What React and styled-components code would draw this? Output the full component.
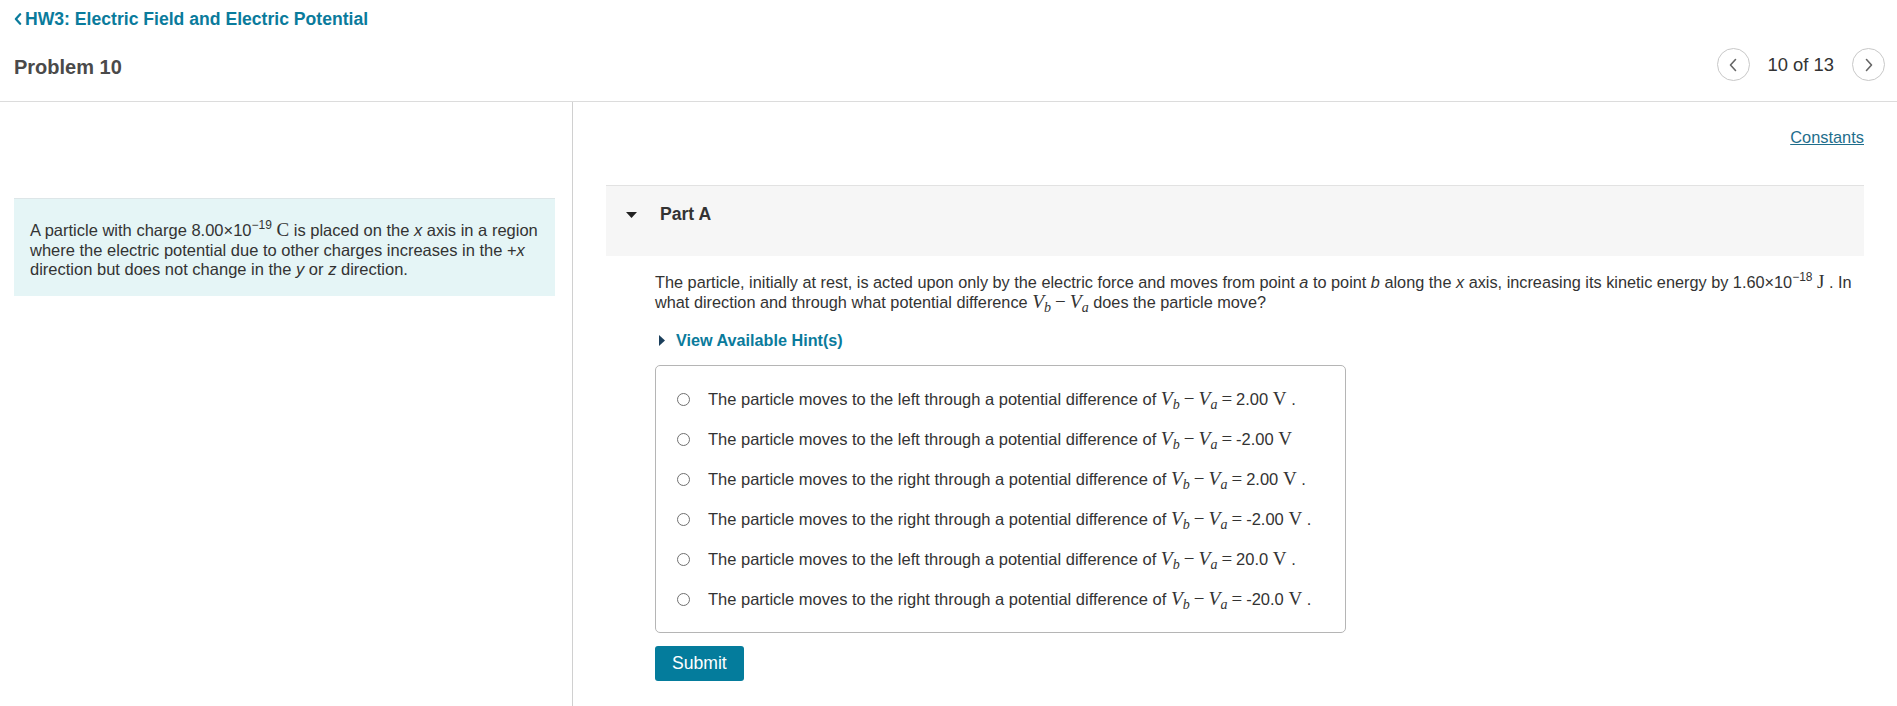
import React from 'react'
import styled, { createGlobalStyle } from 'styled-components'

const GlobalStyle = createGlobalStyle`
  html, body {
    margin: 0;
    padding: 0;
    background: #fff;
  }
  body {
    font-family: 'Liberation Sans', Arial, sans-serif;
    color: #333;
    font-size: 16.5px;
  }
`

const teal = '#0a7b9c'

const Page = styled.div`
  min-height: 706px;
  display: flex;
  flex-direction: column;
`

const TopBar = styled.header`
  border-bottom: 1px solid #dcdcdc;
`

const BackLink = styled.a`
  display: flex;
  align-items: center;
  gap: 3px;
  padding: 10px 14px 0;
  height: 18px;
  font-size: 17.6px;
  font-weight: bold;
  color: ${teal};
  text-decoration: none;
`

const TitleRow = styled.div`
  display: flex;
  align-items: center;
  justify-content: space-between;
  height: 73px;
  padding: 0 12px 0 14px;
`

const Title = styled.h1`
  margin: 6px 0 0;
  font-size: 20px;
  font-weight: bold;
  color: #4a4a4a;
`

const Pager = styled.div`
  display: flex;
  align-items: center;
  gap: 18px;
`

const NavButton = styled.button`
  width: 33px;
  height: 33px;
  border-radius: 50%;
  border: 1px solid #c8c8c8;
  background: #fff;
  display: flex;
  align-items: center;
  justify-content: center;
  padding: 0;
`

const PageCount = styled.span`
  font-size: 18.4px;
  color: #333;
`

const Body = styled.div`
  flex: 1;
  display: grid;
  grid-template-columns: 573px 1fr;
`

const Sidebar = styled.aside`
  border-right: 1px solid #d0d0d0;
  padding: 96px 17px 0 14px;
`

const Intro = styled.div`
  background: #e5f5f6;
  border-top: 1px solid #dde6e8;
  padding: 21px 6px 16px 16px;
  line-height: 19.5px;
  color: #333;
`

const Main = styled.main`
  padding: 0 33px;
  display: flex;
  flex-direction: column;
`

const ConstantsLink = styled.a`
  align-self: flex-end;
  margin-top: 25px;
  line-height: 20px;
  color: #1f6e8c;
  text-decoration: underline;
  font-size: 16.4px;
`

const PartHeader = styled.div`
  margin-top: 38px;
  height: 71px;
  box-sizing: border-box;
  background: #f6f6f6;
  border-top: 1px solid #e2e2e2;
  display: flex;
  align-items: flex-start;
  gap: 23px;
  padding: 19px 20px 0;
`

const PartTitle = styled.span`
  font-size: 17.6px;
  font-weight: bold;
  color: #333;
  line-height: 18px;
`

const PartBody = styled.div`
  padding-left: 49px;
  display: flex;
  flex-direction: column;
  align-items: flex-start;
`

const Question = styled.p`
  margin: 16px -10px 0 0;
  line-height: 20px;
  font-size: 16.3px;
  color: #333;
`

const HintToggle = styled.a`
  margin-top: 19px;
  display: flex;
  align-items: center;
  gap: 11px;
  padding-left: 4px;
  font-weight: bold;
  font-size: 16.2px;
  line-height: 18px;
  color: ${teal};
  text-decoration: none;
`

const Choices = styled.div`
  margin-top: 16px;
  width: 691px;
  box-sizing: border-box;
  border: 1px solid #b5b5b5;
  border-radius: 5px;
  padding: 13px 0 13px;
`

const Choice = styled.label`
  display: flex;
  align-items: center;
  height: 40px;
  padding-left: 21px;
  color: #333;
`

const ChoiceText = styled.span`
  white-space: nowrap;
`

const Radio = styled.span`
  width: 11px;
  height: 11px;
  border-radius: 50%;
  border: 1px solid #707070;
  margin-right: 18px;
  flex-shrink: 0;
`

const SubmitButton = styled.button`
  margin-top: 13px;
  height: 35px;
  padding: 0 17px;
  border: 0;
  border-radius: 3px;
  background: #047c9c;
  color: #fff;
  font-family: 'Liberation Sans', Arial, sans-serif;
  font-size: 17.6px;
`

const MathVar = styled.span`
  font-family: 'Liberation Serif', 'Times New Roman', serif;
  font-style: italic;
  font-size: 19.5px;
`

const MathRoman = styled.span`
  font-family: 'Liberation Serif', 'Times New Roman', serif;
  font-size: 19px;
  margin: 0 ${(p) => (p.$gap ? '4px' : '0')};
`

const Sub = styled.sub`
  font-size: 14px;
  vertical-align: -4px;
  line-height: 0;
  font-family: 'Liberation Serif', 'Times New Roman', serif;
  font-style: italic;
`

const Sup = styled.sup`
  font-size: 12px;
  vertical-align: 7px;
  line-height: 0;
`

const Em = styled.i``

const Chevron = ({ dir, color = '#666', w = 8, h = 14, sw = 1.6 }) => (
  <svg width={w} height={h} viewBox="0 0 8 14">
    <polyline
      points={dir === 'left' ? '6.5,1.5 1.5,7 6.5,12.5' : '1.5,1.5 6.5,7 1.5,12.5'}
      fill="none"
      stroke={color}
      strokeWidth={sw}
      strokeLinecap="round"
      strokeLinejoin="round"
    />
  </svg>
)

const Diff = () => (
  <>
    <MathVar>V</MathVar>
    <Sub>b</Sub>
    <MathRoman $gap>−</MathRoman>
    <MathVar>V</MathVar>
    <Sub>a</Sub>
  </>
)

const choices = [
  ['left', '2.00', true],
  ['left', '-2.00', false],
  ['right', '2.00', true],
  ['right', '-2.00', true],
  ['left', '20.0', true],
  ['right', '-20.0', true],
]

export default function App() {
  return (
    <Page>
      <GlobalStyle />
      <TopBar>
        <BackLink href="#">
          <Chevron dir="left" color={teal} w={8} h={12} sw={2.6} />
          HW3: Electric Field and Electric Potential
        </BackLink>
        <TitleRow>
          <Title>Problem 10</Title>
          <Pager>
            <NavButton aria-label="previous">
              <Chevron dir="left" />
            </NavButton>
            <PageCount>10 of 13</PageCount>
            <NavButton aria-label="next">
              <Chevron dir="right" />
            </NavButton>
          </Pager>
        </TitleRow>
      </TopBar>

      <Body>
        <Sidebar>
          <Intro>
            A particle with charge 8.00×10<Sup>−19</Sup> <MathRoman>C</MathRoman> is placed on the{' '}
            <Em>x</Em> axis in a region where the electric potential due to other charges increases in
            the +<Em>x</Em> direction but does not change in the <Em>y</Em> or <Em>z</Em> direction.
          </Intro>
        </Sidebar>

        <Main>
          <ConstantsLink href="#">Constants</ConstantsLink>
          <PartHeader>
            <svg width="11" height="6" viewBox="0 0 11 6" style={{ marginTop: 7 }}>
              <polygon points="0,0 11,0 5.5,6" fill="#222" />
            </svg>
            <PartTitle>Part A</PartTitle>
          </PartHeader>
          <PartBody>
            <Question>
              The particle, initially at rest, is acted upon only by the electric force and moves from
              point <Em>a</Em> to point <Em>b</Em> along the <Em>x</Em> axis, increasing its kinetic
              energy by 1.60×10<Sup>−18</Sup> <MathRoman>J</MathRoman> . In what direction and through
              what potential difference <Diff /> does the particle move?
            </Question>
            <HintToggle href="#">
              <svg width="6" height="11" viewBox="0 0 6 11">
                <polygon points="0,0 6,5.5 0,11" fill="#1b3f5c" />
              </svg>
              View Available Hint(s)
            </HintToggle>
            <Choices>
              {choices.map(([dir, val, dot], i) => (
                <Choice key={i}>
                  <Radio />
                  <ChoiceText>
                    The particle moves to the {dir} through a potential difference of <Diff />
                    <MathRoman $gap>=</MathRoman>
                    {val} <MathRoman>V</MathRoman>
                    {dot ? ' .' : ''}
                  </ChoiceText>
                </Choice>
              ))}
            </Choices>
            <SubmitButton>Submit</SubmitButton>
          </PartBody>
        </Main>
      </Body>
    </Page>
  )
}
